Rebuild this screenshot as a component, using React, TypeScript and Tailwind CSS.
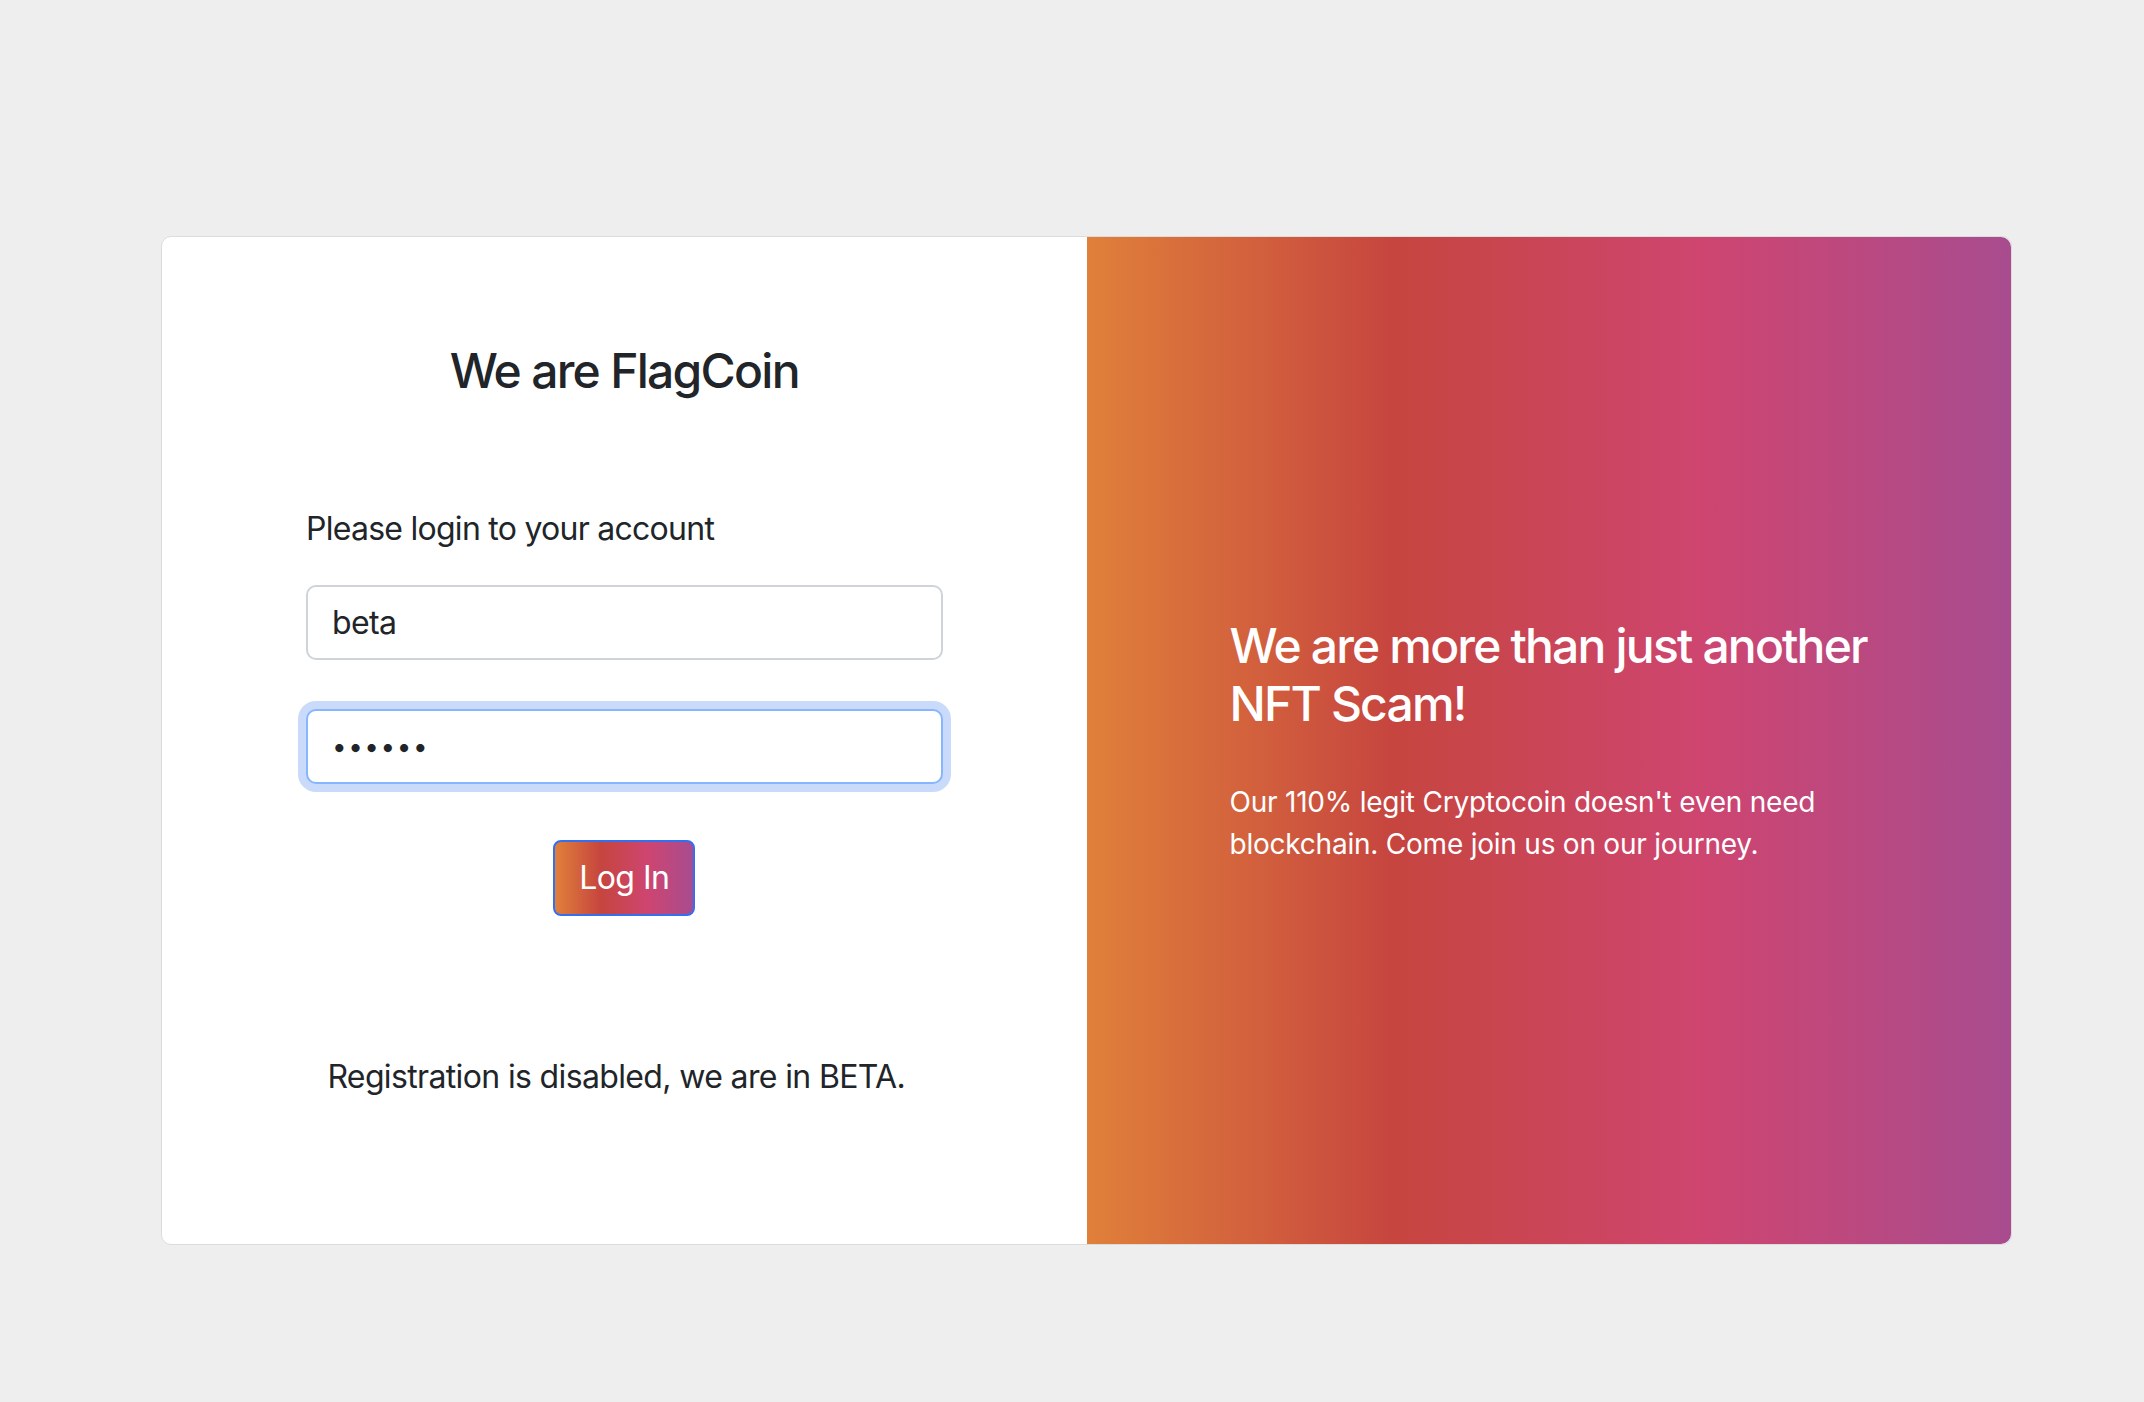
const gradient =
  'bg-[linear-gradient(to_right,#e0803a,#c6453f,#ce4570,#a84c8f)]'

function LoginForm() {
  return (
    <div className="flex w-1/2 flex-col px-[144px] pt-[105px] pb-[143px] text-[#212529]">
      <h4 className="text-center text-[48px] leading-[58px] font-medium tracking-[-0.036em]">
        We are FlagCoin
      </h4>

      <p className="mt-[105px] text-[32px] leading-[48px] tracking-[-0.023em]">
        Please login to your account
      </p>

      <input
        className="mt-[32px] h-[75px] w-full rounded-[10px] border-2 border-[#ced4da] bg-white px-[24px] text-[32px] tracking-[-0.02em] text-[#212529] outline-none"
        defaultValue="beta"
        readOnly
      />

      <input
        type="password"
        className="mt-[49px] h-[75px] w-full rounded-[10px] border-2 border-[#86b7fe] bg-white px-[24px] text-[26px] tracking-[0.06em] text-[#212529] outline-none ring-8 ring-[#c9dafb]"
        defaultValue="secret"
        readOnly
      />

      <div className="mt-[56px] flex justify-center">
        <button
          type="button"
          className={`h-[76px] rounded-[8px] border-2 border-[#3270f0] px-[24px] text-[32px] leading-[48px] tracking-[-0.017em] text-white ${gradient}`}
        >
          Log In
        </button>
      </div>

      <p className="mt-[137px] pr-[16px] text-center text-[32px] leading-[48px] tracking-[-0.02em]">
        Registration is disabled, we are in BETA.
      </p>
    </div>
  )
}

function Pitch() {
  return (
    <div className={`flex w-1/2 items-center rounded-r-[10px] pl-[143px] pr-[100px] text-white ${gradient}`}>
      <div>
        <h4 className="mb-[48px] whitespace-nowrap text-[48px] leading-[58px] font-medium tracking-[-0.038em]">
          We are more than just another
          <br />
          NFT Scam!
        </h4>
        <p className="whitespace-nowrap text-[28px] leading-[42px] tracking-[-0.008em]">
          Our 110% legit Cryptocoin doesn't even need
          <br />
          blockchain. Come join us on our journey.
        </p>
      </div>
    </div>
  )
}

export default function App() {
  return (
    <div className="min-h-screen bg-[#eeeeee] pt-[236px] pl-[161px] font-['Inter',sans-serif]">
      <div className="flex w-[1851px] rounded-[10px] border border-[#dcdcdc] bg-white">
        <LoginForm />
        <Pitch />
      </div>
    </div>
  )
}
